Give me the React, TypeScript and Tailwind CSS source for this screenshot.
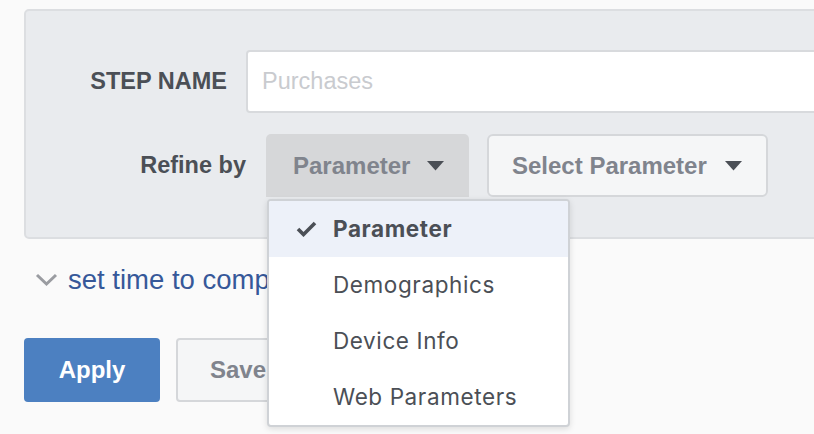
const Caret = () => (
  <svg width="17" height="10" viewBox="0 0 17 10" className="shrink-0">
    <path d="M0 0 L17 0 L8.5 9.5 Z" fill="#4b4f56" />
  </svg>
);

const MenuItem = ({ label, active }: { label: string; active?: boolean }) => (
  <div
    className={`flex h-[56px] items-center ${active ? "bg-[#edf1f9] font-bold" : ""}`}
  >
    <div className="flex w-[64px] justify-end pr-[16px]">
      {active && (
        <svg width="21" height="16" viewBox="0 0 21 16">
          <path d="M2 8 L7.5 13.5 L19 2" fill="none" stroke="#4b4f56" strokeWidth="3.6" />
        </svg>
      )}
    </div>
    <span>{label}</span>
  </div>
);

const App = () => {
  return (
    <div
      className="h-[434px] w-[814px] overflow-hidden bg-[#fafafa] pt-[9px] pl-[24px]"
      style={{ fontFamily: '"Liberation Sans", Arial, sans-serif' }}
    >
      {/* Step panel */}
      <div className="w-[820px] rounded-[5px] border-2 border-[#dcdee1] bg-[#e9ebee] pt-[39px] pb-[40px]">
        <div className="flex items-center">
          <label className="w-[201px] text-right text-[23.5px] font-bold text-[#4b4f56]">
            STEP NAME
          </label>
          <div className="ml-[19px] flex h-[63px] flex-1 items-center rounded-[4px] border-2 border-[#d8dadd] bg-white pl-[14px] text-[23.5px] text-[#c9cbcf]">
            Purchases
          </div>
        </div>

        <div className="mt-[21px] flex items-center">
          <label className="w-[220px] text-right text-[23.5px] font-bold text-[#4b4f56]">
            Refine by
          </label>
          <div className="relative ml-[20px]">
            <button className="flex h-[63px] w-[203px] items-center gap-[17px] rounded-t-[5px] bg-[#d6d7d9] pl-[27px] text-[24px] font-bold text-[#80848d]">
              Parameter
              <Caret />
            </button>

            {/* Dropdown menu */}
            <div
              className="absolute top-[65px] left-[1px] z-10 w-[303px] overflow-hidden rounded-[4px] border-2 border-[#cfd2d6] bg-white text-[22.5px] tracking-[0.6px] text-[#4b4f56] shadow-[0_2px_6px_rgba(0,0,0,0.12)]"
              style={{ fontFamily: 'Inter, "Noto Sans", sans-serif' }}
            >
              <MenuItem label="Parameter" active />
              <MenuItem label="Demographics" />
              <MenuItem label="Device Info" />
              <MenuItem label="Web Parameters" />
            </div>
          </div>
          <button className="ml-[18px] flex h-[63px] w-[281px] items-center gap-[18px] rounded-[6px] border-2 border-[#d5d7da] bg-[#f5f6f7] pl-[23px] text-[24px] font-bold text-[#80848d]">
            Select Parameter
            <Caret />
          </button>
        </div>
      </div>

      {/* Compare link */}
      <div className="mt-[24px] flex items-center gap-[10px] pl-[11px]">
        <svg width="23" height="14" viewBox="0 0 23 14">
          <path d="M2 2 L11.5 11 L21 2" fill="none" stroke="#9a9ca1" strokeWidth="3" />
        </svg>
        <a className="text-[27.5px] leading-[34px] text-[#365899]">set time to compare</a>
      </div>

      {/* Actions */}
      <div className="mt-[41px] flex gap-[16px]">
        <button className="h-[64px] w-[136px] rounded-[4px] bg-[#4c80c1] text-[24px] font-bold text-white">
          Apply
        </button>
        <button className="h-[64px] w-[140px] rounded-[4px] border-2 border-[#d5d7da] bg-[#f5f6f7] pl-[32px] text-left text-[24px] font-bold text-[#80848d]">
          Save
        </button>
      </div>
    </div>
  );
};

export default App;
